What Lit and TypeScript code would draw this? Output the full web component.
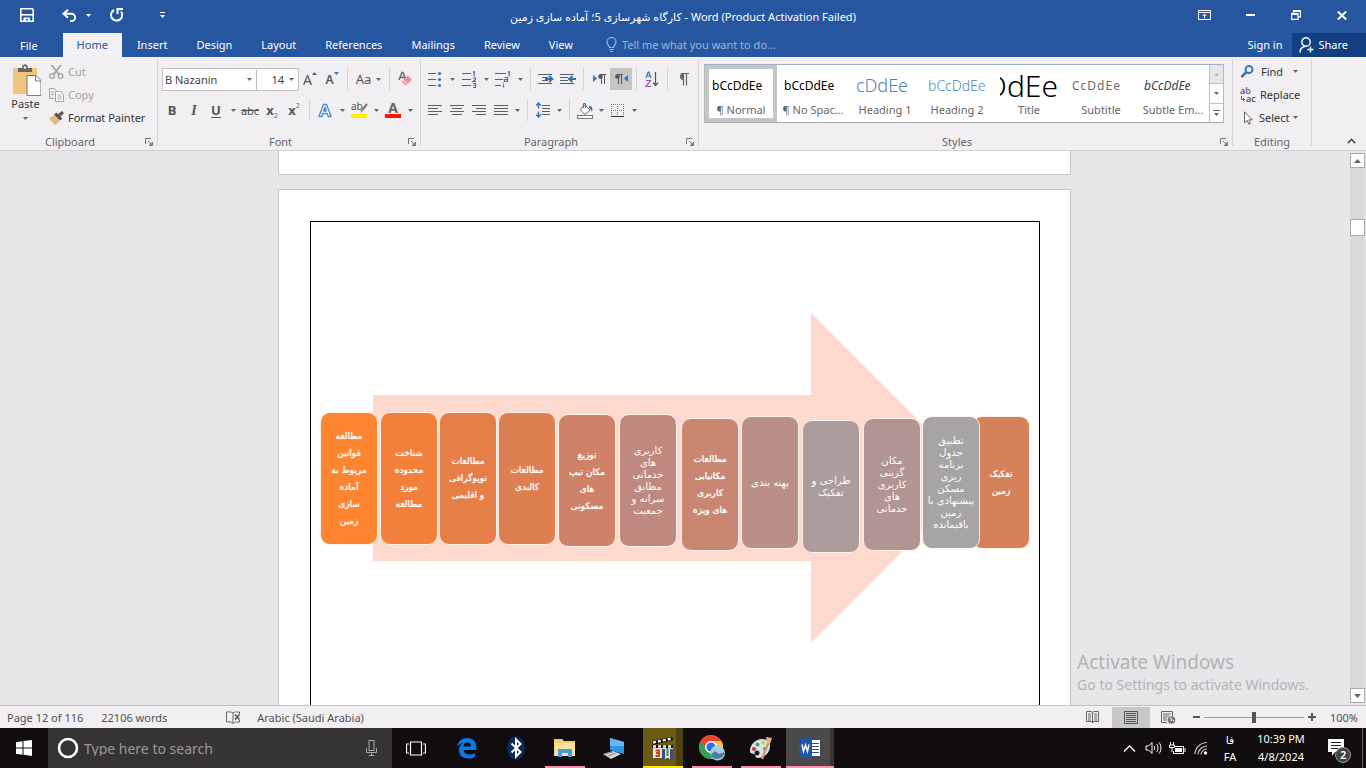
import { LitElement, html, css, svg, nothing } from "lit";
import { customElement } from "lit/decorators.js";

const down = html`<svg class="caret" width="5" height="3" viewBox="0 0 5 3"><path d="M0 0h5L2.5 3z" fill="#666" /></svg>`;

const icon = (w: number, h: number, body: unknown) =>
  html`<svg width=${w} height=${h} viewBox="0 0 ${w} ${h}" fill="none" aria-hidden="true">${body}</svg>`;

const launcher = icon(8, 8, svg`<path d="M.5 6V.5H6M3 3l3.5 3.5M7.5 4v3.500H4" stroke="#777"/><path d="M7.500 4v3.500H4z" fill="#777"/>`);

const lines = (rows: number[][]) => svg`${rows.map(([x, y, w]) => svg`<path d="M${x} ${y + 0.5}h${w}" stroke="#5f5f5f"/>`)}`;

interface Tool {
  label: string;
  body: unknown;
  menu?: boolean;
  on?: boolean;
  wide?: boolean;
}
type Item = Tool | null;

const fontTop: Item[] = [
  { label: "Grow Font", body: html`<span class="ga">A</span>${icon(5, 3, svg`<path d="M0 3h5L2.500 0z" fill="#4a5a70"/>`)}` },
  { label: "Shrink Font", body: html`<span class="gs">A</span>${icon(5, 3, svg`<path d="M0 0h5L2.500 3z" fill="#3a77b5"/>`)}` },
  null,
  { label: "Change Case", wide: true, body: html`<span class="aa">Aa</span>${down}` },
  null,
  {
    label: "Clear Formatting",
    body: icon(16, 16, svg`<path d="M2 9L5 1.500h1L8.500 8M3.200 6.500h4.500" stroke="#666" stroke-width="1.400"/><path d="M10.500 4.500l4.500 4-6 6-4.500-4z" fill="#ea8f98"/><path d="M6 9l4.500 4" stroke="#fff"/>`),
  },
];

const fontBottom: Item[] = [
  { label: "Bold", body: html`<b class="g">B</b>` },
  { label: "Italic", body: html`<i class="g it">I</i>` },
  { label: "Underline", body: html`<b class="g un">U</b>`, menu: true },
  { label: "Strikethrough", body: html`<s class="g st">abc</s>` },
  { label: "Subscript", body: html`<b class="g">x</b><span class="sub">2</span>` },
  { label: "Superscript", body: html`<b class="g">x</b><span class="sup">2</span>` },
  null,
  {
    label: "Text Effects",
    menu: true,
    body: icon(14, 15, svg`<path d="M1 13.500L5.500 1.500h3L13 13.500h-2.800l-1-3H4.800l-1 3zM5.600 8h2.800L7 4z" stroke="#4b86c6" stroke-width="1.300" fill="#fff" stroke-linejoin="round"/>`),
  },
  {
    label: "Text Highlight Color",
    menu: true,
    body: html`<span class="hl">ab${icon(9, 10, svg`<path d="M8 1L3.500 6.500" stroke="#777" stroke-width="2.200"/><path d="M3 6l1.500 1.500L1 10z" fill="#777"/>`)}</span>`,
  },
  { label: "Font Color", menu: true, body: html`<b class="fc">A</b>` },
];

const digit1 = "l1.200-1v5";
const spread = [[0, 2, 8], [0, 8, 8], [0, 14, 8]];
const paraTop: Item[] = [
  {
    label: "Bullets",
    menu: true,
    body: icon(14, 17, svg`${lines(spread)}<circle cx="11.500" cy="2.500" r="1.600" fill="#3a77b5"/><circle cx="11.500" cy="8.500" r="1.600" fill="#3a77b5"/><circle cx="11.500" cy="14.500" r="1.600" fill="#3a77b5"/>`),
  },
  {
    label: "Numbering",
    menu: true,
    body: icon(15, 17, svg`${lines([[0, 2, 9], [0, 8, 9], [0, 14, 9]])}<path d="M11 1.500${digit1}M11 7h2.500v1.500L11 10.500h3M11 12.500h2.500v4H11M11.500 14.500h2" stroke="#3a77b5" stroke-width="1.200"/>`),
  },
  {
    label: "Multilevel List",
    menu: true,
    body: icon(17, 17, svg`${lines([[0, 2, 11], [0, 8, 8], [0, 14, 6]])}<path d="M13 1.500${digit1}M9.500 6.500h3v4h-3v-2h3M8.500 13.500v3M8.500 11.500v1" stroke="#3a77b5" stroke-width="1.200"/>`),
  },
  null,
  {
    label: "Decrease Indent",
    body: icon(16, 11, svg`${lines([[0, 0, 14], [4, 3, 6], [4, 6, 6], [0, 9, 14]])}<path d="M7 5h7M11 2l3.500 3L11 8" stroke="#2f74b5" stroke-width="1.800"/>`),
  },
  {
    label: "Increase Indent",
    body: icon(16, 11, svg`${lines([[0, 0, 14], [0, 3, 8], [0, 6, 8], [0, 9, 14]])}<path d="M16 5H9M12.500 2L9 5l3.500 3" stroke="#2f74b5" stroke-width="1.800"/>`),
  },
  null,
  {
    label: "Left-to-Right",
    body: icon(13, 10, svg`<path d="M0 1v7l4-3.500z" fill="#2f74b5"/><path d="M8.500 0v10M11.500 0v10M7 .5h6" stroke="#555"/><circle cx="7.500" cy="2.500" r="2.300" fill="#555"/>`),
  },
  {
    label: "Right-to-Left",
    on: true,
    body: icon(13, 10, svg`<path d="M13 1v7L9 4.500z" fill="#2f74b5"/><path d="M3.500 0v10M6.500 0v10M2 .5h6" stroke="#555"/><circle cx="2.500" cy="2.500" r="2.300" fill="#555"/>`),
  },
  null,
  {
    label: "Sort",
    body: icon(14, 16, svg`<path d="M1 7l2.200-6h.6L6 7M1.800 5h3.400" stroke="#3a6fb0" stroke-width="1.200"/><path d="M1 9.500h4.500L1 15.500h5" stroke="#8e5aa6" stroke-width="1.200"/><path d="M10.500 1v13M8 11.500l2.500 3 2.500-3" stroke="#555" stroke-width="1.200"/>`),
  },
  null,
  {
    label: "Show/Hide",
    body: icon(11, 13, svg`<path d="M5.500 0v12.500M8.500 0v12.500M3 .5h8" stroke="#666" stroke-width="1.200"/><path d="M5.500 0a3.300 3.300 0 0 0 0 7z" fill="#666"/>`),
  },
];

const paraBottom: Item[] = [
  { label: "Align Left", body: icon(14, 11, lines([[0, 0, 14], [0, 3, 10], [0, 6, 14], [0, 9, 10]])) },
  { label: "Center", body: icon(14, 11, lines([[0, 0, 14], [2, 3, 10], [0, 6, 14], [2, 9, 10]])) },
  { label: "Align Right", body: icon(14, 11, lines([[0, 0, 14], [4, 3, 10], [0, 6, 14], [4, 9, 10]])) },
  { label: "Justify", menu: true, body: icon(14, 11, lines([[0, 0, 14], [0, 3, 14], [0, 6, 14], [0, 9, 14]])) },
  null,
  {
    label: "Line Spacing",
    menu: true,
    body: icon(14, 16, svg`${lines([[6, 3, 8], [6, 6, 8], [6, 9, 8], [6, 12, 8]])}<path d="M2.500 1v5.500M.3 3.500L2.500 1l2.200 2.500M2.500 9.500V15M.3 12.500L2.500 15l2.200-2.500" stroke="#2f74b5" stroke-width="1.400"/>`),
  },
  null,
  {
    label: "Shading",
    menu: true,
    body: icon(17, 17, svg`<path d="M3 7.500L8 3l5 5-5 4.500z" fill="#fff" stroke="#666"/><path d="M6.500 6V1.500h2V6" stroke="#666"/><path d="M12 4c3 0 4 2 3 6-1-2-1-3-3-4z" fill="#2f74b5"/><rect x=".5" y="13.500" width="15" height="3" fill="#fff" stroke="#777"/>`),
  },
  {
    label: "Borders",
    menu: true,
    body: icon(14, 13, svg`<path d="M0 .5h14M0 6.500h14M.5 0v12M6.500 0v12M12.500 0v12" stroke="#777" stroke-dasharray="1 1"/><path d="M0 12.500h13" stroke="#333"/>`),
  },
];

const styleCards = [
  { name: "¶ Normal", sample: "bCcDdEe", cls: "plain", on: true },
  { name: "¶ No Spac...", sample: "bCcDdEe", cls: "plain" },
  { name: "Heading 1", sample: "cDdEe", cls: "h1" },
  { name: "Heading 2", sample: "bCcDdEe", cls: "h2" },
  { name: "Title", sample: "DdEe", cls: "title" },
  { name: "Subtitle", sample: "CcDdEe", cls: "subtitle" },
  { name: "Subtle Em...", sample: "bCcDdEe", cls: "em" },
];

/* Process steps, in the coordinates of the drawing area. */
const steps = [
  { x: 662, y: 195, c: "#d7815b", t: ["تفکیک", "زمین"] },
  { x: 612, y: 195, c: "#a6a4a5", tight: true, t: ["تطبیق", "جدول", "برنامه", "ریزی", "مسکن", "پیشنهادی با", "زمین", "باقیمانده"] },
  { x: 553, y: 197, c: "#b19592", tight: true, t: ["مکان", "گزینی", "کاربری", "های", "خدماتی"] },
  { x: 492, y: 199, c: "#ac9c9b", tight: true, t: ["طراحی و", "تفکیک"] },
  { x: 431, y: 195, c: "#ba8f87", tight: true, t: ["پهنه بندی"] },
  { x: 371, y: 197, c: "#c98772", t: ["مطالعات", "مکانیابی", "کاربری", "های ویژه"] },
  { x: 309, y: 193, c: "#c08980", tight: true, t: ["کاربری", "های", "خدماتی", "مطابق", "سرانه و", "جمعیت"] },
  { x: 248, y: 193, c: "#cf8267", t: ["توزیع", "مکان تیپ", "های", "مسکونی"] },
  { x: 188, y: 191, c: "#de7f52", t: ["مطالعات", "کالبدی"] },
  { x: 129, y: 191, c: "#e67e47", t: ["مطالعات", "توپوگرافی", "و اقلیمی"] },
  { x: 70, y: 191, c: "#f2803b", t: ["شناخت", "محدوده", "مورد", "مطالعه"] },
  { x: 10, y: 191, c: "#fd852f", t: ["مطالعه", "قوانین", "مربوط به", "آماده", "سازی", "زمین"] },
];

const base = css`
  * { box-sizing: border-box; }
  button, input { font: inherit; color: inherit; border: 0; padding: 0; margin: 0; background: none; border-radius: 0; outline: 0; min-width: 0; }
  svg { display: block; flex: none; }
`;

@customElement("word-header")
class WordHeader extends LitElement {
  static styles = [base, css`
    :host { display: block; background: #2656a0; color: #fff; }
    .bar { display: grid; grid-template-columns: 1fr auto 1fr; height: 33px; align-items: center; }
    .quick { display: flex; align-items: center; padding: 0 0 3px 20px; }
    .quick button { display: flex; align-items: center; }
    .undo { margin-left: 28px; gap: 9px; }
    .redo { margin-left: 19px; }
    .more { margin-left: 36px; }
    .name { margin: 0; font-size: 11px; font-weight: 400; white-space: nowrap; }
    .win { display: flex; justify-content: flex-end; align-self: stretch; padding-right: 1px; }
    .win button { width: 46px; height: 30px; display: grid; place-items: center; }
    .tabs { display: flex; height: 24px; gap: 1px; align-items: stretch; }
    .tabs > a { display: flex; align-items: center; padding: 0 14px 1px; color: #fff; text-decoration: none; }
    .tabs > a.file { padding: 0 24px 0 20px; }
    .tabs > a.on { background: #f1f1f3; color: #2b579a; }
    .tell { display: flex; align-items: center; gap: 5px; margin-left: 18px; padding-bottom: 1px; color: #a2b9dc; flex: 1; }
    .tell input { flex: 1; max-width: 240px; }
    .tell input::placeholder { color: #9db5da; opacity: 1; }
    .tabs > a.sign { padding: 0 9px 1px; }
    .share { display: flex; align-items: center; gap: 4px; background: #113f80; padding: 0 18px 1px 7px; }
  `];
  render() {
    return html`
      <div class="bar">
        <div class="quick">
          <button aria-label="Save">${icon(14, 14, svg`<path d="M.8.8h11.400l1 1v11.400H.8z" stroke="#fff" stroke-width="1.600"/><path d="M1 6.800h12" stroke="#fff" stroke-width="1.600"/><path d="M3.500 13V9.500h6.500V13H8v-2H6v2z" fill="#fff"/>`)}</button>
          <button class="undo" aria-label="Undo">${icon(15, 13, svg`<path d="M6 .8L1.500 4.800l4.500 4M2 4.800h7.500a3.600 3.600 0 0 1 0 7.200H8" stroke="#fff" stroke-width="2"/>`)}${icon(5, 3, svg`<path d="M0 0h5L2.500 3z" fill="#fff"/>`)}</button>
          <button class="redo" aria-label="Repeat">${icon(14, 14, svg`<path d="M4 2a5.600 5.600 0 1 0 7 1.500" stroke="#fff" stroke-width="2"/><path d="M6.500 1h6.500M7.500 1v5" stroke="#fff" stroke-width="2"/>`)}</button>
          <button class="more" aria-label="Customize toolbar">${icon(5, 6, svg`<path d="M0 .5h5" stroke="#fff"/><path d="M0 3h5L2.500 6z" fill="#fff"/>`)}</button>
        </div>
        <h1 class="name"><bdi dir="rtl" lang="fa">کارگاه شهرسازی 5؛ آماده سازی زمین</bdi> - Word (Product Activation Failed)</h1>
        <div class="win">
          <button aria-label="Ribbon options">${icon(13, 10, svg`<path d="M.5.5h12v9H.5zM.5 2.500h12M6.500 8.500V4M4.500 6l2-2 2 2" stroke="#fff"/>`)}</button>
          <button aria-label="Minimize">${icon(9, 2, svg`<path d="M0 1h9" stroke="#fff" stroke-width="2"/>`)}</button>
          <button aria-label="Restore">${icon(10, 10, svg`<path d="M.5 4h6.500v5.500H.5zM2.500 4V.8h7v6H7.500" stroke="#fff" stroke-width="1.300"/><path d="M0 4h7M2 1h8" stroke="#fff" stroke-width="2"/>`)}</button>
          <button aria-label="Close">${icon(10, 9, svg`<path d="M.8.5l8.400 8M9.200.5L.8 8.500" stroke="#fff" stroke-width="2"/>`)}</button>
        </div>
      </div>
      <nav class="tabs">
        <a class="file" href="#file">File</a><a class="on" href="#home">Home</a>
        ${["Insert", "Design", "Layout", "References", "Mailings", "Review", "View"].map((t) => html`<a href="#${t}">${t}</a>`)}
        <label class="tell">${icon(11, 15, svg`<path d="M3.500 10.500C3.500 8.500 1 8 1 5a4.500 4.500 0 0 1 9 0c0 3-2.500 3.500-2.500 5.500zM3.500 12.500h4M4 14.500h3" stroke="#a2b9dc" stroke-width="1.200"/>`)}<input aria-label="Tell me" placeholder="Tell me what you want to do..." /></label>
        <a class="sign" href="#signin">Sign in</a>
        <button class="share">${icon(15, 16, svg`<circle cx="7" cy="5" r="4.200" stroke="#fff" stroke-width="1.400"/><path d="M1 15.500c0-3.500 2-5.500 5-6M11.500 9.500v6M8.500 12.500h6" stroke="#fff" stroke-width="1.400"/>`)}Share</button>
      </nav>`;
  }
}

@customElement("word-ribbon")
class WordRibbon extends LitElement {
  static styles = [base, css`
    :host { display: flex; height: 93px; background: #f1eff1; border-bottom: 1px solid #d2d0d2; color: #444; }
    .group { display: flex; flex-direction: column; position: relative; margin: 2px 0 4px; border-right: 1px solid #d4d2d4; flex: none; }
    .group > .body { flex: 1; }
    .label { display: flex; justify-content: center; height: 14px; line-height: 14px; margin-bottom: -3px; padding-right: 17px; color: #666; }
    .launch { position: absolute; right: 4px; bottom: 0; }
    .clip { width: 158px; }
    .clip .body { display: flex; gap: 8px; padding: 1px 0 0 10px; }
    .paste { display: flex; flex-direction: column; align-items: center; padding-top: 4px; width: 31px; color: #333; }
    .paste .caret { margin-top: 6px; }
    .stack { display: flex; flex-direction: column; }
    .stack button { display: flex; align-items: center; gap: 4px; height: 23px; color: #333; white-space: nowrap; }
    .clip .stack .off { color: #a3a3a3; }
    .font { width: 263px; }
    .para { width: 278px; }
    .row { display: flex; align-items: center; height: 24px; }
    .font .body { padding: 8px 0 0 4px; }
    .para .body { padding: 8px 0 0 3px; }
    .row + .row { margin-top: 7px; }
    .font .row + .row { margin-left: -1px; }
    .tool { width: 22px; height: 22px; display: flex; align-items: center; justify-content: center; flex: none; }
    .tool.on { background: #c6c5c6; }
    .tool.wide { width: 33px; gap: 5px; }
    .drop { width: 12px; height: 22px; display: grid; place-items: center; flex: none; }
    .para .row + .row .drop { width: 11px; }
    .sep { width: 1px; height: 22px; margin: 0 4px; background: #d4d2d4; flex: none; }
    .combo { display: flex; align-items: center; height: 23px; background: #fff; border: 1px solid #c3c2c3; color: #444; }
    .combo input { flex: 1; padding-left: 2px; }
    .combo button { width: 13px; height: 21px; display: grid; place-items: center; }
    .combo.face { width: 95px; }
    .combo.size { width: 43px; margin: 0 0 0 -1px; }
    .combo.size input { text-align: right; padding-right: 1px; }
    .g { font-size: 13px; color: #555; }
    .it { font-family: "Liberation Serif", serif; font-weight: 700; font-size: 14px; }
    .un { text-decoration: underline; text-underline-offset: 2px; }
    .st { font-size: 11px; }
    .ga { font-size: 14px; color: #555; }
    .gs { font-size: 12px; color: #555; font-weight: 600; }
    .ga + svg, .gs + svg { align-self: flex-start; margin-top: 4px; }
    .aa { font-size: 13px; color: #555; }
    .sub { font-size: 7px; color: #2f74b5; align-self: flex-end; line-height: 11px; }
    .sup { font-size: 7px; color: #2f74b5; align-self: flex-start; line-height: 13px; }
    .hl { display: flex; width: 16px; height: 16px; line-height: 9px; font-size: 10px; color: #555; border-bottom: 4px solid #ffec00; }
    .hl svg { margin-left: -4px; margin-top: 1px; }
    .fc { width: 16px; height: 16px; line-height: 11px; font-size: 14px; text-align: center; color: #666; border-bottom: 4px solid #fb1200; }
    .styles { flex: 1; min-width: 300px; max-width: 534px; }
    .styles .body { padding: 5px 8px 0 5px; }
    .gallery { display: flex; height: 59px; border: 1px solid #aab4c8; border-color: #9fb0cf #b8b8b8 #aaa; background: #fff; }
    .cards { display: flex; flex: 1; overflow: hidden; }
    .card { width: 72px; flex: none; border: 4px solid transparent; display: flex; flex-direction: column; align-items: center; white-space: nowrap; color: #666; }
    .card.on { border-color: #c6c5c6; }
    .sample { height: 33px; width: 58px; display: flex; justify-content: flex-start; align-items: center; overflow: hidden; color: #000; font-size: 12px; }
    .h1 { color: #4a86bd; font-size: 18px; font-weight: 300; }
    .h2 { color: #4a86bd; font-size: 14px; font-weight: 300; }
    .title { font-size: 30px; font-weight: 300; line-height: 28px; justify-content: flex-end; }
    .subtitle { color: #6a6a6a; letter-spacing: 1px; }
    .em { color: #404040; font-style: italic; }
    .pager { display: flex; flex-direction: column; width: 14px; border-left: 1px solid #c3c2c3; }
    .pager button { flex: 1; display: grid; place-items: center; border-bottom: 1px solid #c3c2c3; }
    .pager button:first-child { background: #e8e7e8; }
    .pager button:last-child { border-bottom: 0; }
    .edit { width: 79px; }
    .edit .body { padding: 1px 0 0 7px; }
    .edit .label { padding-right: 0; }
    .edit .stack button svg:first-child { width: 16px; }
    .stack .find { gap: 5px; }
    .find .caret { margin-left: 5px; }
    .stack .select { gap: 3px; }
    .fold { margin: auto 10px 6px auto; }
  `];
  private tools(items: Item[]) {
    return items.map((i) =>
      i === null
        ? html`<span class="sep"></span>`
        : html`<button class="tool ${i.on ? "on" : ""} ${i.wide ? "wide" : ""}" aria-label=${i.label}>${i.body}</button>${i.menu ? html`<button class="drop" aria-label="${i.label} options">${down}</button>` : nothing}`
    );
  }
  render() {
    return html`
      <section class="group clip">
        <div class="body">
          <button class="paste">${icon(30, 32, svg`<rect x="2" y="4" width="24" height="26" rx="1" fill="#f0c47d"/><path d="M7 8V4h4c0-5 6-5 6 0h4v4z" fill="#6a6560"/><circle cx="14" cy="3.500" r="1.300" fill="#f1eff1"/><path d="M16 11.500h9l5 5v15H16z" fill="#fff" stroke="#777"/><path d="M24.500 11.500v5.500H30" stroke="#777"/>`)}Paste${down}</button>
          <div class="stack">
            <button class="off">${icon(15, 14, svg`<circle cx="3" cy="11" r="2.300" stroke="#a3a3a3" stroke-width="1.300"/><circle cx="11.500" cy="11" r="2.300" stroke="#a3a3a3" stroke-width="1.300"/><path d="M2.500 0L10 9.500M12 0L4.500 9.500" stroke="#a3a3a3" stroke-width="1.800"/>`)}Cut</button>
            <button class="off">${icon(15, 14, svg`<path d="M5.500 10.500h-5V.5h5l2 2M2 4h3M2 6.500h3" stroke="#a3a3a3"/><path d="M6.500 3.500h5l3 3v7h-8zM8.500 7h4M8.500 9h4M8.500 11h4" stroke="#a3a3a3" fill="#fff"/>`)}Copy</button>
            <button>${icon(15, 14, svg`<path d="M0 7l6-3 5 5-4 5C4 13 2 10 0 7z" fill="#e8b97e"/><path d="M5 3.500L7.500 1.500l6 6-2.500 2z" fill="#5a5552"/><path d="M10 4.500L14 1" stroke="#5a5552" stroke-width="3"/>`)}Format Painter</button>
          </div>
        </div>
        <div class="label">Clipboard</div>
        <button class="launch" aria-label="Clipboard settings">${launcher}</button>
      </section>
      <section class="group font">
        <div class="body">
          <div class="row">
            <div class="combo face"><input aria-label="Font" value="B Nazanin" /><button aria-label="Choose font">${down}</button></div>
            <div class="combo size"><input aria-label="Font size" value="14" /><button aria-label="Choose size">${down}</button></div>
            ${this.tools(fontTop)}
          </div>
          <div class="row">${this.tools(fontBottom)}</div>
        </div>
        <div class="label">Font</div>
        <button class="launch" aria-label="Font settings">${launcher}</button>
      </section>
      <section class="group para">
        <div class="body">
          <div class="row">${this.tools(paraTop)}</div>
          <div class="row">${this.tools(paraBottom)}</div>
        </div>
        <div class="label">Paragraph</div>
        <button class="launch" aria-label="Paragraph settings">${launcher}</button>
      </section>
      <section class="group styles">
        <div class="body">
          <div class="gallery">
            <div class="cards">
              ${styleCards.map((s) => html`<button class="card ${s.on ? "on" : ""}"><span class="sample ${s.cls}">${s.sample}</span><span>${s.name}</span></button>`)}
            </div>
            <div class="pager">
              <button aria-label="Previous styles">${icon(5, 3, svg`<path d="M0 3h5L2.500 0z" fill="#bbb"/>`)}</button>
              <button aria-label="Next styles">${down}</button>
              <button aria-label="All styles">${icon(7, 6, svg`<path d="M0 .5h7" stroke="#666"/><path d="M1 3h5L3.500 6z" fill="#666"/>`)}</button>
            </div>
          </div>
        </div>
        <div class="label">Styles</div>
        <button class="launch" aria-label="Styles settings">${launcher}</button>
      </section>
      <section class="group edit">
        <div class="body stack">
          <button class="find">${icon(16, 13, svg`<circle cx="9" cy="4.500" r="3.500" stroke="#3a77b5" stroke-width="2"/><path d="M6.500 7L1.500 12" stroke="#3a77b5" stroke-width="2.600"/>`)}Find${down}</button>
          <button>${icon(16, 16, svg`<text x="0" y="7" font-size="9" font-weight="600" fill="#555">a<tspan fill="#8d54b0">b</tspan></text><text x="6" y="15" font-size="9" font-weight="600" fill="#555">ac</text><path d="M1.500 9v3.500h3M3 11l1.500 1.500L3 14" stroke="#2f74b5"/>`)}Replace</button>
          <button class="select">${icon(16, 14, svg`<path d="M4.500.8v11l2.700-2.500 1.600 4 1.700-.7-1.600-3.800h3.400z" stroke="#666" fill="#fff"/>`)}Select${down}</button>
        </div>
        <div class="label">Editing</div>
      </section>
      <button class="fold" aria-label="Collapse ribbon">${icon(9, 6, svg`<path d="M.8 5.200L4.500 1.500l3.700 3.700" stroke="#555" stroke-width="1.700"/>`)}</button>`;
  }
}

@customElement("word-document")
class WordDocument extends LitElement {
  static styles = [base, css`
    :host { display: flex; background: #e7e6e9; overflow: hidden; position: relative; }
    .canvas { flex: 1; display: flex; flex-direction: column; align-items: center; gap: 14px; overflow: hidden; }
    .page { width: 793px; background: #fff; border: 1px solid #c6c6c8; flex: none; }
    .prev { height: 25px; margin-top: -1px; border-top: 0; }
    .cur { height: 1122px; padding: 31px 30px 31px 31px; }
    .frame { height: 100%; border: 1px solid #000; position: relative; }
    .arrow { position: absolute; left: 62px; top: 91px; }
    .step { position: absolute; width: 58px; height: 133px; margin: -1px; border: 1px solid #fff3ec; border-radius: 10px; color: #fff; display: flex; flex-direction: column; align-items: center; justify-content: center; font: 9px/17px "DejaVu Sans", sans-serif; text-shadow: 0 0 1px #fff; white-space: nowrap; }
    .step.tight { font-size: 10px; line-height: 12px; text-shadow: none; }
    .scroll { width: 17px; padding: 2px 1px; display: flex; flex-direction: column; background: #e7e6e9; }
    .scroll button { height: 15px; border: 1px solid #aaa; background: #fff; display: grid; place-items: center; }
    .track { flex: 1; background: #dadadc; padding-top: 51px; }
    .thumb { height: 17px; background: #fff; border: 1px solid #aaa; }
    .mark { position: absolute; right: 57px; bottom: 9px; color: #b4b3b6; }
    .mark p { margin: 0; font-size: 14px; line-height: 22px; }
    .mark .big { font-size: 19px; line-height: 24px; }
  `];
  render() {
    return html`
      <div class="canvas">
        <div class="page prev"></div>
        <div class="page cur">
          <div class="frame">
            <svg class="arrow" width="604" height="330" viewBox="0 0 604 330"><path d="M0 82h438V0l165 165-165 165v-82H0z" fill="#fdd9ce" /></svg>
            ${steps.map((s) => html`<div class="step ${s.tight ? "tight" : ""}" dir="rtl" lang="fa" style="left:${s.x}px;top:${s.y}px;background:${s.c}">${s.t.map((l) => html`<span>${l}</span>`)}</div>`)}
          </div>
        </div>
      </div>
      <div class="scroll">
        <button aria-label="Scroll up">${icon(7, 4, svg`<path d="M0 4h7L3.500 0z" fill="#666"/>`)}</button>
        <div class="track"><div class="thumb"></div></div>
        <button aria-label="Scroll down">${icon(7, 4, svg`<path d="M0 0h7L3.500 4z" fill="#666"/>`)}</button>
      </div>
      <div class="mark"><p class="big">Activate Windows</p><p>Go to Settings to activate Windows.</p></div>`;
  }
}

@customElement("word-status")
class WordStatus extends LitElement {
  static styles = [base, css`
    :host { display: flex; align-items: center; height: 22px; background: #f1eff2; border-top: 1px solid #c2c1c3; color: #505050; padding-left: 7px; }
    .words { margin-left: 18px; }
    .proof { margin-left: 59px; }
    .lang { margin-left: 16px; }
    .view { width: 38px; height: 21px; display: grid; place-items: center; }
    .right { display: flex; align-items: center; margin-left: auto; padding-right: 8px; }
    .view.on { background: #c8c7ca; }
    .minus { margin-left: 5px; }
    .zoom { -webkit-appearance: none; appearance: none; width: 100px; height: 13px; margin: 0 4px; background: linear-gradient(#9b9a9c, #9b9a9c) center / 100% 1px no-repeat; }
    .zoom::-webkit-slider-thumb { -webkit-appearance: none; width: 4px; height: 11px; background: #555; }
    .pct { margin-left: 14px; }
  `];
  render() {
    return html`
      <span>Page 12 of 116</span><span class="words">22106 words</span>
      <button class="proof" aria-label="Proofing">${icon(15, 13, svg`<path d="M7 2C5 .7 3 .7.5 1v10c2.500-.3 4.500-.3 6.500 1.500V2c1-.9 2-1.200 3-1.200M7 12.500c1-.8 2-1.300 3-1.500" stroke="#666"/><path d="M9 3.500l4.500 5M13.500 3.500L9 8.500" stroke="#555" stroke-width="1.500"/><path d="M10.500 1h3v2M13.500 9v2h-3" stroke="#666"/>`)}</button>
      <button class="lang">Arabic (Saudi Arabia)</button>
      <div class="right">
        <button class="view" aria-label="Read Mode">${icon(13, 12, svg`<path d="M6.500 2v10M.5.5h5l1 1.500 1-1.500h5v10h-5l-1 1.500-1-1.500h-5zM2 3h3M2 5h3M2 7h3M2 9h3M8 3h3M8 5h3M8 7h3M8 9h3" stroke="#666"/>`)}</button>
        <button class="view on" aria-label="Print Layout">${icon(14, 13, svg`<path d="M.5.5h13v12H.5zM2 2.500h10M2 4.500h10M2 6.500h10M2 8.500h10M2 10.500h10" stroke="#555"/>`)}</button>
        <button class="view" aria-label="Web Layout">${icon(15, 13, svg`<path d="M6 11.500H.5V.5h11V5M2 3h8M2 5h6M2 7h4M2 9h4" stroke="#666"/><circle cx="10.500" cy="9" r="3.800" fill="#777"/><path d="M9 7l2 1-1 2M12 9l1 1" stroke="#fff"/>`)}</button>
        <button class="minus" aria-label="Zoom out">${icon(7, 2, svg`<path d="M0 1h7" stroke="#555" stroke-width="2"/>`)}</button>
        <input class="zoom" type="range" aria-label="Zoom" min="0" max="200" value="100" />
        <button aria-label="Zoom in">${icon(8, 8, svg`<path d="M0 4h8M4 0v8" stroke="#555" stroke-width="2"/>`)}</button>
        <span class="pct">100%</span>
      </div>`;
  }
}

const apps = [
  { name: "Edge", art: icon(22, 22, svg`<path d="M1 10C2 4 6 1 11 1c6 0 9.500 4 9.500 9.500V13H7.500c.3 3 2.800 4.500 6 4.500 2.300 0 4-.5 5.500-1.500v4c-1.800 1-4 1.500-6.500 1.500C6.500 21.500 3 18 3 13c0-3 1.500-5.500 4-7-2.500.5-4.500 2-6 4zm6.500-.5h7.500c0-2.500-1.500-4-3.700-4S7.700 7 7.500 9.500z" fill="#0b78e3"/>`) },
  { name: "Bluetooth", art: icon(22, 24, svg`<ellipse cx="11" cy="12" rx="9" ry="11.500" fill="#0a2a5c"/><path d="M6.500 7.500l9 8.500-4.500 4.500v-17l4.500 4.500-9 8.500" stroke="#fff" stroke-width="2"/>`) },
  { name: "File Explorer", cls: "run", art: icon(22, 20, svg`<path d="M0 1h8l2 2h11v15H0z" fill="#f3cf74"/><path d="M1 5h20v13H1z" fill="#fbe29a"/><path d="M4 19v-8h14v8h-4v-4H8v4z" fill="#3f9fd8"/>`) },
  { name: "Remote", art: icon(24, 22, svg`<path d="M8 1l14 4v12L8 13z" fill="#2f96e8"/><path d="M8 1l14 4v4L8 9z" fill="#62b7f4"/><path d="M1 17l10-3 8 3-10 5z" fill="#d4d8da"/><path d="M3 17l8-2M6 19l8-3" stroke="#888"/>`) },
  { name: "Calendar clips", cls: "busy", art: icon(24, 24, svg`<path d="M2 10h20v12H2z" fill="#e9e6da"/><path d="M1 5l20-4 1 3L2 9z" fill="#111"/><path d="M1 9h21v3H1z" fill="#111"/><path d="M2 6.500l19-4M2 10.500h20" stroke="#f4f0e4" stroke-width="2.400" stroke-dasharray="3 2"/><path d="M4.500 14.500h3.500v5.500H4.500M5 17h3" stroke="#d0421b" stroke-width="1.800"/><path d="M12.500 13v10M20.500 13v10" stroke="#454a86" stroke-width="3"/><path d="M16.500 12v8" stroke="#2d9a4c" stroke-width="2"/><path d="M14.500 15v8M18.500 15v8" stroke="#dfe5f5"/>`) },
  { name: "Chrome", cls: "run", art: icon(26, 26, svg`<circle cx="12" cy="12" r="12" fill="#e8432e"/><path d="M1.600 6A12 12 0 0 0 12 24l5-9-5 2-5-3z" fill="#30a350"/><path d="M12 24a12 12 0 0 0 10.400-18H12l5 9z" fill="#f9c92e"/><path d="M1.600 6A12 12 0 0 1 22.400 6H12z" fill="#e8432e"/><circle cx="12" cy="12" r="6" fill="#fff"/><circle cx="12" cy="12" r="4.600" fill="#2d6fd8"/><circle cx="18.500" cy="18" r="7.500" fill="#a5cbe6"/><path d="M11.500 20l4.500-4 4 3 5.500-2a7.500 7.500 0 0 1-14 3z" fill="#4a7c9c"/>`) },
  { name: "Paint", cls: "run", art: icon(24, 24, svg`<path d="M1 15C1 8 7 3 13 3c5 0 8 3 8 7 0 7-6 12-12 12-3 0-2-3-4-4s-4 0-4-3z" fill="#d5e6ef"/><circle cx="5" cy="13" r="2" fill="#c9372b"/><circle cx="8.500" cy="8.500" r="2" fill="#46a655"/><circle cx="14" cy="6.500" r="2" fill="#e6c33a"/><circle cx="8" cy="17" r="2.500" fill="#17202a"/><circle cx="16" cy="13" r="2" fill="#3b8ec8"/><path d="M20 5L13 23" stroke="#d79a58" stroke-width="2.400"/><path d="M17 1l6 1-2 6-3-1z" fill="#e4b980"/>`) },
  { name: "Word", cls: "active", art: icon(22, 22, svg`<rect x="10" y="3" width="11" height="16" fill="#fff"/><path d="M12 6.500h8M12 9.500h8M12 12.500h8M12 15.500h8" stroke="#2b579a"/><path d="M0 2l13-2v22L0 20z" fill="#2455a4"/><path d="M3 7.500l1.500 7 2-6.500 2 6.500 1.500-7" stroke="#fff" stroke-width="1.400"/>`) },
];

@customElement("task-bar")
class TaskBar extends LitElement {
  static styles = [base, css`
    :host { display: flex; height: 40px; background: #110d0e; color: #fff; }
    .start, .view { width: 48px; display: grid; place-items: center; }
    .search { width: 344px; display: flex; align-items: center; background: #353334; padding: 0 15px 0 9px; gap: 5px; }
    .search input { flex: 1; font-size: 14px; }
    .search input::placeholder { color: #9a9899; opacity: 1; }
    .apps { display: flex; gap: 1px; margin-left: 3px; }
    .apps button { width: 48px; padding: 0 4px; display: flex; }
    .apps span { flex: 1; height: 40px; display: grid; place-items: center; }
    .apps .run span { box-shadow: inset 0 -2px #ff8fb1; }
    .apps .busy span { box-shadow: inset 0 -2px #ffe600; background: linear-gradient(90deg, #6a5b12 82%, #4d420f 82%); }
    .apps .active { padding: 0; }
    .apps .active span { box-shadow: inset 0 -2px #ff8fb1; background: linear-gradient(90deg, #4b4848 92%, #373434 92%); }
    .tray { display: flex; align-items: center; margin-left: auto; }
    .tray button { display: grid; place-items: center; height: 40px; width: 24px; }
    .tray .lang { width: 32px; line-height: 17px; align-content: center; margin-left: 1px; }
    .tray .clock { width: 70px; line-height: 18px; align-content: center; }
    .tray .note { width: 46px; padding-top: 6px; }
    .tray .desk { width: 4px; border-left: 1px solid #666; }
  `];
  render() {
    return html`
      <button class="start" aria-label="Start">${icon(16, 16, svg`<path d="M0 2.200l6.500-1v6.300H0zM7.500 1L16 0v7.500H7.500zM0 8.500h6.500v6.300l-6.500-1zM7.500 8.500H16V16l-8.500-1.200z" fill="#fff"/>`)}</button>
      <label class="search">${icon(22, 22, svg`<circle cx="11" cy="11" r="9" stroke="#fff" stroke-width="2.600"/>`)}<input aria-label="Search" placeholder="Type here to search" />${icon(11, 16, svg`<rect x="3" y=".5" width="5" height="10" stroke="#aaa"/><path d="M.5 8v4.500h10V8M5.500 12.500v3M3 15.500h5" stroke="#aaa"/>`)}</label>
      <button class="view" aria-label="Task View">${icon(20, 15, svg`<path d="M4.500 1h11v13h-11zM3 3H.5v9H3M17 3h2.500v9H17" stroke="#fff" stroke-width="1.200"/>`)}</button>
      <div class="apps">${apps.map((a) => html`<button class=${a.cls ?? "idle"} aria-label=${a.name}><span>${a.art}</span></button>`)}</div>
      <div class="tray">
        <button aria-label="Hidden icons">${icon(13, 7, svg`<path d="M1 6.500L6.500 1 12 6.500" stroke="#fff" stroke-width="1.300"/>`)}</button>
        <button aria-label="Volume">${icon(17, 14, svg`<path d="M1 5h2.500L7 1.500v11L3.500 9H1zM9 5c1 1 1 3 0 4M11.500 3c2 2 2 6 0 8M14 1.500c2.500 3 2.500 8 0 11" stroke="#fff"/>`)}</button>
        <button aria-label="Power">${icon(17, 13, svg`<path d="M5 4.500h9.500v7H4.500V9M16 6v4" stroke="#fff"/><rect x="6" y="6" width="7" height="4" fill="#fff"/><path d="M1.500 0v3M4.500 0v3M.5 3h5v2.500h-5zM3 5v5" stroke="#fff"/>`)}</button>
        <button aria-label="Network">${icon(14, 14, svg`<path d="M1 13A12 12 0 0 1 13 1.500M4 13.500a9 9 0 0 1 9-8.500M7 13.500A6 6 0 0 1 13 8" stroke="#ccc" stroke-width="1.200"/><circle cx="11.500" cy="12" r="1.700" fill="#fff"/>`)}</button>
        <button class="lang"><span lang="fa">فا</span><span>FA</span></button>
        <button class="clock"><span>10:39 PM</span><span>4/8/2024</span></button>
        <button class="note" aria-label="Notifications">${icon(26, 26, svg`<path d="M2 1h16v13H9l-3 4v-4H2z" fill="#fff"/><path d="M5 4.500h10M5 7.500h10M5 10.500h7" stroke="#222"/><circle cx="17" cy="17" r="7.500" fill="#444" stroke="#999"/><text x="14" y="21" font-size="11" font-weight="600" fill="#fff">2</text>`)}</button>
        <button class="desk" aria-label="Show desktop"></button>
      </div>`;
  }
}

@customElement("app-root")
class AppRoot extends LitElement {
  static styles = css`
    :host { display: flex; flex-direction: column; height: 100vh; overflow: hidden; font: 11px/15px "Noto Sans", "Open Sans", "DejaVu Sans", sans-serif; }
    word-document { flex: 1; min-height: 0; }
  `;
  render() {
    return html`<word-header></word-header><word-ribbon></word-ribbon><word-document></word-document><word-status></word-status><task-bar></task-bar>`;
  }
}
